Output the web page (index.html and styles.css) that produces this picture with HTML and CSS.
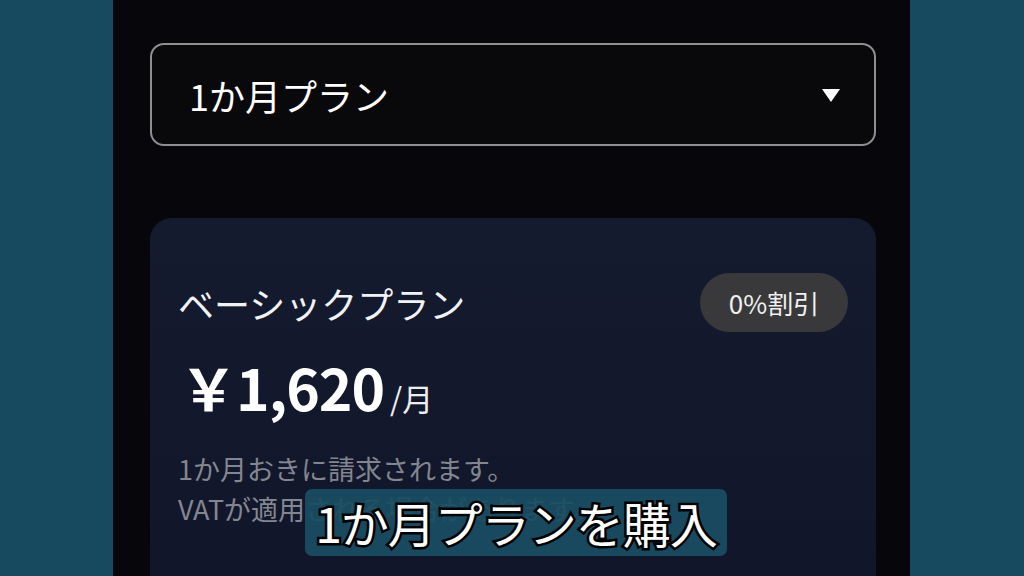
FILE: index.html
```html
<!DOCTYPE html>
<html lang="ja">
<head>
<meta charset="utf-8">
<link rel="stylesheet" href="styles.css">
</head>
<body>
<div class="stage">
  <main class="phone">
    <div class="select">
      <span class="select-label">1か月プラン</span>
      <span class="caret"></span>
    </div>
    <section class="card">
      <div class="card-head">
        <h2 class="plan-name">ベーシックプラン</h2>
        <span class="badge">0%割引</span>
      </div>
      <div class="price">
        <span class="amount">￥1,620</span><span class="unit">/月</span>
      </div>
      <p class="note">1か月おきに請求されます。<br>VATが適用される場合があります。</p>
    </section>
  </main>
</div>
<div class="caption">1か月プランを購入</div>
</body>
</html>
```

FILE: styles.css
```css
html, body {
  margin: 0;
  padding: 0;
  width: 1024px;
  height: 576px;
  overflow: hidden;
  background: #174a5f;
  font-family: "Noto Sans CJK JP", "Noto Sans", sans-serif;
}
.stage {
  display: flex;
  justify-content: flex-start;
  height: 576px;
  padding-left: 113px;
}
.phone {
  width: 797px;
  height: 576px;
  overflow: hidden;
  background: #07070b;
  box-sizing: border-box;
  padding: 43px 34px 0 37px;
  display: flex;
  flex-direction: column;
  gap: 72px;
}
.select {
  flex-shrink: 0;
  height: 103px;
  box-sizing: border-box;
  border: 2px solid #8f8f8f;
  border-radius: 14px;
  background: #09090b;
  display: flex;
  align-items: center;
  justify-content: space-between;
  padding: 0 34px 0 37px;
}
.select-label {
  color: #ffffff;
  font-size: 36px;
  line-height: 1;
}
.caret {
  width: 0;
  height: 0;
  border-left: 9px solid transparent;
  border-right: 9px solid transparent;
  border-top: 13px solid #ffffff;
  margin-top: 2px;
}
.card {
  flex-shrink: 0;
  height: 420px;
  border-radius: 22px;
  background: linear-gradient(180deg, #151b2f 0%, #10152a 100%);
  box-sizing: border-box;
  padding: 55px 28px 0 28px;
}
.card-head {
  display: flex;
  align-items: center;
  justify-content: space-between;
}
.plan-name {
  margin: 0;
  color: #f2f2f4;
  font-weight: 400;
  font-size: 36px;
  line-height: 1;
}
.badge {
  height: 59px;
  width: 148px;
  border-radius: 30px;
  background: #39393b;
  color: #f0f0f0;
  font-size: 26px;
  display: flex;
  align-items: center;
  justify-content: center;
}
.price {
  display: flex;
  align-items: baseline;
  margin-top: 20px;
  color: #ffffff;
}
.amount {
  font-size: 57px;
  font-weight: 700;
  letter-spacing: -1px;
  margin-left: 2px;
  line-height: 1.2;
}
.unit {
  font-size: 31px;
  margin-left: 6px;
  color: #eeeeee;
}
.note {
  margin: 29px 0 0 0;
  color: #83868f;
  font-size: 27px;
  line-height: 40px;
}
.caption {
  position: absolute;
  left: 305px;
  top: 489px;
  width: 422px;
  height: 67px;
  border-radius: 7px;
  background: rgba(26, 78, 98, 0.93);
  color: #ffffff;
  font-size: 48px;
  line-height: 67px;
  text-align: center;
  -webkit-text-stroke: 5px #000000;
  paint-order: stroke fill;
  letter-spacing: -1px;
  white-space: nowrap;
}
```
